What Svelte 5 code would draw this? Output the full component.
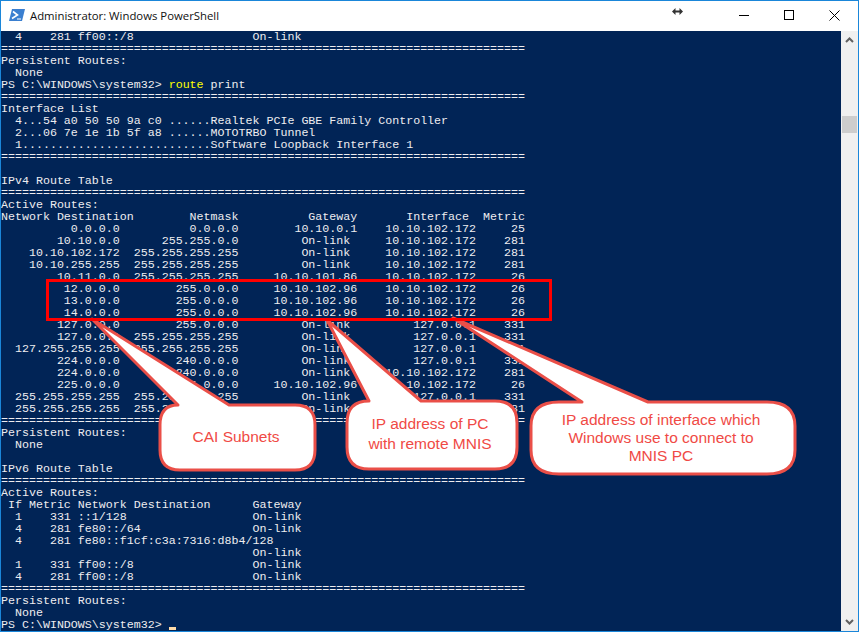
<script>
	const rule = '='.repeat(75);

	// route table rows: dest, mask, gateway, interface, metric
	const routes = [
		['0.0.0.0', '0.0.0.0', '10.10.0.1', '10.10.102.172', '25'],
		['10.10.0.0', '255.255.0.0', 'On-link ', '10.10.102.172', '281'],
		['10.10.102.172', '255.255.255.255', 'On-link ', '10.10.102.172', '281'],
		['10.10.255.255', '255.255.255.255', 'On-link ', '10.10.102.172', '281'],
		['10.11.0.0', '255.255.255.255', '10.10.101.86', '10.10.102.172', '26'],
		['12.0.0.0', '255.0.0.0', '10.10.102.96', '10.10.102.172', '26'],
		['13.0.0.0', '255.0.0.0', '10.10.102.96', '10.10.102.172', '26'],
		['14.0.0.0', '255.0.0.0', '10.10.102.96', '10.10.102.172', '26'],
		['127.0.0.0', '255.0.0.0', 'On-link ', '127.0.0.1', '331'],
		['127.0.0.1', '255.255.255.255', 'On-link ', '127.0.0.1', '331'],
		['127.255.255.255', '255.255.255.255', 'On-link ', '127.0.0.1', '331'],
		['224.0.0.0', '240.0.0.0', 'On-link ', '127.0.0.1', '331'],
		['224.0.0.0', '240.0.0.0', 'On-link ', '10.10.102.172', '281'],
		['225.0.0.0', '255.0.0.0', '10.10.102.96', '10.10.102.172', '26'],
		['255.255.255.255', '255.255.255.255', 'On-link ', '127.0.0.1', '331'],
		['255.255.255.255', '255.255.255.255', 'On-link ', '10.10.102.172', '281']
	];

	const routeLines = routes.map(
		(r) =>
			r[0].padStart(17) + r[1].padStart(17) + r[2].padStart(17) + r[3].padStart(17) + r[4].padStart(7)
	);

	const before = [
		'  4    281 ff00::/8                 On-link',
		rule,
		'Persistent Routes:',
		'  None'
	];

	const middle = [
		rule,
		'Interface List',
		'  4...54 a0 50 50 9a c0 ......Realtek PCIe GBE Family Controller',
		'  2...06 7e 1e 1b 5f a8 ......MOTOTRBO Tunnel',
		'  1...........................Software Loopback Interface 1',
		rule,
		' ',
		'IPv4 Route Table',
		rule,
		'Active Routes:',
		'Network Destination        Netmask          Gateway       Interface  Metric',
		...routeLines,
		rule,
		'Persistent Routes:',
		'  None',
		' ',
		'IPv6 Route Table',
		rule,
		'Active Routes:',
		' If Metric Network Destination      Gateway',
		'  1    331 ::1/128                  On-link',
		'  4    281 fe80::/64                On-link',
		'  4    281 fe80::f1cf:c3a:7316:d8b4/128',
		'                                    On-link',
		'  1    331 ff00::/8                 On-link',
		'  4    281 ff00::/8                 On-link',
		rule,
		'Persistent Routes:',
		'  None'
	];
</script>

<div class="window">
	<header class="titlebar">
		<svg class="ps-icon" width="16" height="12" viewBox="0 0 16 12">
			<path d="M3 0H16L13 12H0Z" fill="#3a7fd0" />
			<path d="M4 2.5L8.5 6L3 9.5" fill="none" stroke="#fff" stroke-width="1.6" />
			<path d="M8 10H12" stroke="#dfe9f6" stroke-width="1.2" />
		</svg>
		<span class="title">Administrator: Windows PowerShell</span>
		<svg class="resize" width="11" height="7" viewBox="0 0 11 7">
			<path d="M0 3.5L3.5 0V2.5H7.5V0L11 3.5L7.5 7V4.5H3.5V7Z" fill="#333" />
		</svg>
		<svg class="min" width="10" height="1" viewBox="0 0 10 1"><rect width="10" height="1" fill="#000" /></svg>
		<svg class="max" width="10" height="10" viewBox="0 0 10 10">
			<rect x="0.5" y="0.5" width="9" height="9" fill="none" stroke="#000" />
		</svg>
		<svg class="close" width="11" height="11" viewBox="0 0 11 11">
			<path d="M0.5 0.5L10.5 10.5M10.5 0.5L0.5 10.5" stroke="#000" stroke-width="1" />
		</svg>
	</header>

	<div class="content">
		<div class="console">
			{#each before as line}
				<div class="line">{line}</div>
			{/each}
			<div class="line">PS C:\WINDOWS\system32&gt; <span class="cmd">route</span> print</div>
			{#each middle as line}
				<div class="line">{line}</div>
			{/each}
			<div class="line">PS C:\WINDOWS\system32&gt; <span class="cursor"></span></div>
		</div>
		<div class="scrollbar">
			<svg width="9" height="6" viewBox="0 0 9 6" class="arrow-up">
				<path d="M1 5L4.5 1.5L8 5" fill="none" stroke="#606060" stroke-width="2" />
			</svg>
			<div class="thumb"></div>
			<svg width="9" height="6" viewBox="0 0 9 6" class="arrow-down">
				<path d="M1 1L4.5 4.5L8 1" fill="none" stroke="#606060" stroke-width="2" />
			</svg>
		</div>
	</div>

	<!-- annotations drawn over the console -->
	<svg class="notes" width="859" height="632" viewBox="0 0 859 632">
		<g class="bubble">
			<path d="M178 405L92 319L229 405H295Q315 405 315 425V450Q315 470 295 470H180Q160 470 160 450V425Q160 405 178 405Z" />
			<path d="M369 401L327 320L421 401H495Q517 401 517 423V447Q517 469 495 469H369Q347 469 347 447V423Q347 401 369 401Z" />
			<path d="M582 402L453 318L648 402H767Q795 402 795 426V450Q795 474 767 474H559Q531 474 531 450V426Q531 402 559 402Z" />
		</g>
		<rect class="highlight" x="47.5" y="280.5" width="503" height="39" />
		<g class="label">
			<text x="236" y="442">CAI Subnets</text>
			<text x="430" y="429">IP address of PC</text>
			<text x="430" y="449">with remote MNIS</text>
			<text x="661" y="425">IP address of interface which</text>
			<text x="661" y="443">Windows use to connect to</text>
			<text x="661" y="461">MNIS PC</text>
		</g>
	</svg>
</div>

<style>
	:global(body) {
		margin: 0;
		background: #fff;
	}

	.window {
		position: relative;
		width: 859px;
		height: 632px;
		box-sizing: border-box;
		border: 1px solid #1a86d9;
		display: flex;
		flex-direction: column;
		overflow: hidden;
	}

	.titlebar {
		height: 30px;
		box-sizing: border-box;
		padding-bottom: 2px;
		padding-right: 18px;
		display: flex;
		align-items: center;
		background: #fff;
		flex-shrink: 0;
	}

	.ps-icon {
		margin-left: 8px;
		margin-right: 5px;
	}

	.title {
		font-family: "Open Sans", sans-serif;
		font-size: 11.35px;
		color: #111;
		white-space: nowrap;
	}

	.resize {
		margin-left: auto;
		margin-top: -8px;
	}

	.min {
		margin-left: 56px;
	}

	.max {
		margin-left: 35px;
	}

	.close {
		margin-left: 35px;
	}

	.content {
		flex: 1;
		display: flex;
		min-height: 0;
	}

	.console {
		flex: 1;
		background: #012456;
		color: #eeedf0;
		font-family: "Liberation Mono", monospace;
		font-size: 11.65px;
		line-height: 12px;
		overflow: hidden;
	}

	.line {
		height: 12px;
		white-space: pre;
	}

	.cmd {
		color: #ffff00;
	}

	.cursor {
		display: inline-block;
		width: 7px;
		height: 3px;
		background: #fedba9;
		vertical-align: -2px;
	}

	.scrollbar {
		width: 17px;
		background: #f0f0f0;
		flex-shrink: 0;
		display: flex;
		flex-direction: column;
		align-items: center;
	}

	.arrow-up {
		margin-top: 6px;
	}

	.thumb {
		width: 15px;
		height: 17px;
		margin-top: 73px;
		background: #cdcdcd;
	}

	.arrow-down {
		margin-top: auto;
		margin-bottom: 6px;
	}

	.notes {
		position: absolute;
		left: -1px;
		top: -1px;
		pointer-events: none;
	}

	.bubble path {
		fill: #fff;
		stroke: #ea4f48;
		stroke-width: 3;
		stroke-linejoin: round;
	}

	.highlight {
		fill: none;
		stroke: #ff0000;
		stroke-width: 3;
	}

	.label text {
		font-family: "Liberation Sans", sans-serif;
		font-size: 15.5px;
		fill: #f04a45;
		text-anchor: middle;
	}
</style>
